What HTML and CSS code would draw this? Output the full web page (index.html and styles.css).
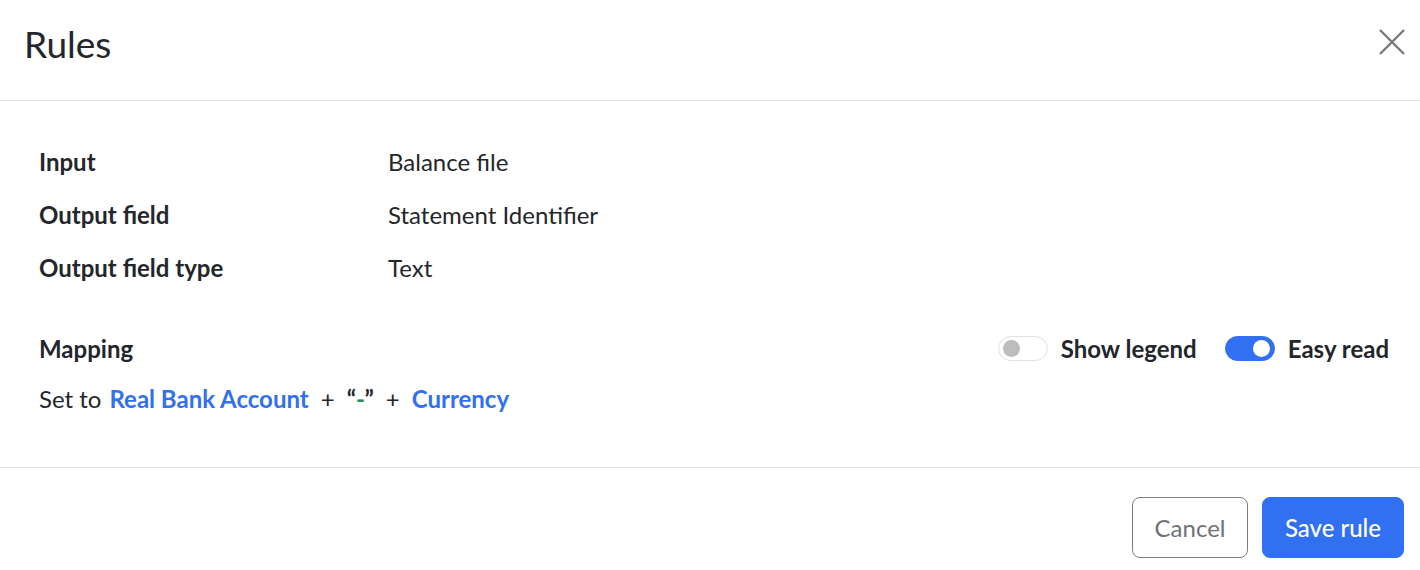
FILE: index.html
```html
<!DOCTYPE html>
<html lang="en">
<head>
<meta charset="utf-8">
<title>Rules</title>
<link rel="stylesheet" href="styles.css">
</head>
<body>
<div class="modal">
  <header class="modal-header">
    <h1 class="modal-title">Rules</h1>
    <button class="close-btn" aria-label="Close">
      <svg width="28" height="28" viewBox="0 0 28 28"><path d="M2 2 L26 26 M26 2 L2 26" stroke="#777a7f" stroke-width="2.4" fill="none"/></svg>
    </button>
  </header>
  <section class="modal-body">
    <dl class="details">
      <dt>Input</dt><dd>Balance file</dd>
      <dt>Output field</dt><dd>Statement Identifier</dd>
      <dt>Output field type</dt><dd>Text</dd>
    </dl>
    <div class="mapping-head">
      <span class="mapping-label">Mapping</span>
      <div class="toggles">
        <label class="toggle-item"><span class="toggle"><span class="knob"></span></span><span class="toggle-text">Show legend</span></label>
        <label class="toggle-item"><span class="toggle on"><span class="knob"></span></span><span class="toggle-text">Easy read</span></label>
      </div>
    </div>
    <div class="mapping-expr">
      <span>Set to</span>
      <span class="field">Real Bank Account</span>
      <span class="op">+</span>
      <span class="literal">“<span class="dash">-</span>”</span>
      <span class="op">+</span>
      <span class="field">Currency</span>
    </div>
  </section>
  <footer class="modal-footer">
    <button class="btn btn-secondary">Cancel</button>
    <button class="btn btn-primary">Save rule</button>
  </footer>
</div>
</body>
</html>
```
FILE: styles.css
```css
* { box-sizing: border-box; }
html, body { margin: 0; padding: 0; background: #fff; }
body {
  font-family: Lato, "Noto Sans", sans-serif;
  color: #23262b;
}
.modal { width: 1420px; height: 570px; display: flex; flex-direction: column; }
.modal-header {
  height: 101px;
  border-bottom: 1px solid #dfe1e5;
  display: flex;
  align-items: flex-start;
  justify-content: space-between;
  padding: 21px 14px 0 24px;
}
.modal-title { margin: 0; font-size: 37px; font-weight: 400; line-height: 46px; color: #23262b; }
.close-btn { border: 0; background: none; padding: 0; margin-top: 7px; width: 28px; height: 28px; cursor: pointer; }
.close-btn svg { display: block; }
.modal-body { height: 367px; border-bottom: 1px solid #dfe1e5; padding: 45px 31px 0 39px; }
.details {
  margin: 0;
  display: grid;
  grid-template-columns: 349px 1fr;
  row-gap: 22px;
  font-size: 24px;
  line-height: 31px;
}
.details dt { font-weight: 700; }
.details dd { margin: 0; }
.mapping-head {
  margin-top: 49px;
  display: flex;
  justify-content: space-between;
  align-items: center;
  height: 32px;
}
.mapping-label { font-size: 24px; font-weight: 700; }
.toggles { display: flex; gap: 28px; align-items: center; }
.toggle-item { display: flex; align-items: center; gap: 13px; font-size: 24px; font-weight: 700; }
.toggle {
  width: 50px; height: 25px; border-radius: 13px;
  border: 1px solid #dfe1e5; background: #fff;
  display: flex; align-items: center; padding: 0 4px;
}
.toggle .knob { width: 17px; height: 17px; border-radius: 50%; background: #bdbdbd; }
.toggle.on { background: #3170f0; border-color: #3170f0; justify-content: flex-end; }
.toggle.on .knob { background: #fff; }
.mapping-expr {
  margin-top: 19px;
  display: flex; align-items: center; gap: 8px;
  font-size: 24px; line-height: 32px;
}
.mapping-expr .field { color: #3170f0; font-weight: 700; }
.mapping-expr .op { margin: 0 4px; }
.literal { font-weight: 700; }
.dash { color: #2e8b57; }
.modal-footer {
  flex: 1;
  display: flex; justify-content: flex-end; align-items: flex-start;
  padding: 29px 16px 0 0; gap: 14px;
}
.btn {
  height: 61px; border-radius: 8px; font-family: inherit; font-size: 24px; cursor: pointer;
}
.btn-secondary { width: 116px; background: #fff; border: 1px solid #7a7e84; color: #6e7379; }
.btn-primary { width: 142px; background: #3170f0; border: 1px solid #3170f0; color: #fff; font-weight: 500; }
```
